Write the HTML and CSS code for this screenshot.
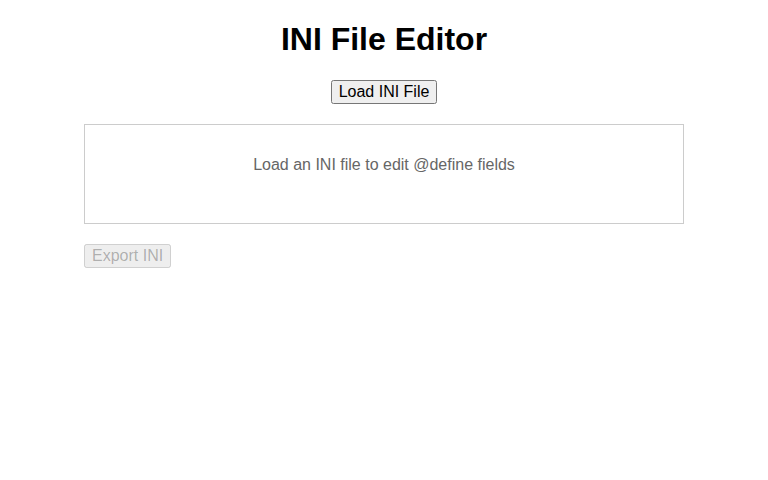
FILE: index.html
```html
<!DOCTYPE html>
<html>
<head>
<meta charset="utf-8">
<title>INI File Editor</title>
<link rel="stylesheet" href="styles.css">
</head>
<body>
<h1 class="title">INI File Editor</h1>
<div class="loader">
  <button class="btn" type="button">Load INI File</button>
</div>
<div class="container">
  <div class="fields">Load an INI file to edit @define fields</div>
  <button class="btn" type="button" disabled>Export INI</button>
</div>
</body>
</html>
```

FILE: styles.css
```css
body {
  margin: 0 8px 8px;
  font-family: "Liberation Sans", Arial, sans-serif;
  background: #fff;
  color: #000;
}
.title {
  font-size: 32px;
  font-weight: bold;
  text-align: center;
  margin: 21.44px 0;
}
.loader {
  text-align: center;
}
.btn {
  font-family: "Liberation Sans", Arial, sans-serif;
  font-size: 16px;
  padding: 1px 6px;
  line-height: normal;
}
.container {
  max-width: 600px;
  margin: 20px auto 0;
}
.fields {
  box-sizing: border-box;
  height: 100px;
  border: 1px solid #ccc;
  padding: 31px 20px 0;
  text-align: center;
  color: #666;
  font-size: 16px;
  margin-bottom: 20px;
}
```
